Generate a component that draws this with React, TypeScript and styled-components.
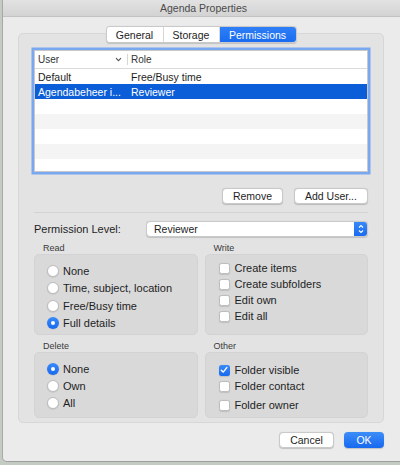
import React from "react";
import styled, { createGlobalStyle } from "styled-components";

const Global = createGlobalStyle`
  html, body {
    margin: 0;
    padding: 0;
    width: 400px;
    height: 465px;
    overflow: hidden;
    background: #c4cbc2;
  }
  body {
    font-family: "Liberation Sans", Arial, sans-serif;
    color: #1e1e1e;
    -webkit-font-smoothing: antialiased;
  }
  * { box-sizing: border-box; }
`;

const Window = styled.div`
  margin-left: 2px;
  height: 462px;
  background: #ebebeb;
  border-left: 1px solid #a8a8a8;
  border-bottom: 1px solid #9e9e9e;
  border-bottom-left-radius: 5px;
  display: flex;
  flex-direction: column;
`;

const TitleBar = styled.div`
  height: 17px;
  flex: none;
  background: linear-gradient(#e2e2e2, #d3d3d3);
  border-bottom: 1px solid #c2c2c2;
  display: flex;
  align-items: center;
  justify-content: center;
  font-size: 10.5px;
  color: #4b4b4b;
  padding-left: 4px;
`;

const Body = styled.div`
  flex: 1;
  display: flex;
  flex-direction: column;
  padding: 0 16px 0 15px;
`;

const TabsRow = styled.div`
  display: flex;
  justify-content: center;
  margin-top: 9px;
  position: relative;
  z-index: 1;
`;

const Segmented = styled.div`
  display: flex;
  height: 17px;
  background: #fff;
  border: 1px solid #c9c9c9;
  border-radius: 4px;
  overflow: hidden;
  box-shadow: 0 0.5px 1px rgba(0, 0, 0, 0.15);
`;

const Segment = styled.div<{ $w: number; $active?: boolean }>`
  width: ${(p) => p.$w}px;
  display: flex;
  align-items: center;
  justify-content: center;
  font-size: 10.5px;
  color: ${(p) => (p.$active ? "#fff" : "#222")};
  background: ${(p) => (p.$active ? "linear-gradient(#2f7ff6, #1a6cf1)" : "#fff")};
  & + & {
    border-left: 1px solid #d8d8d8;
  }
`;

const TabBox = styled.div`
  margin-top: -10px;
  height: 390px;
  background: #e3e3e3;
  border: 1px solid #d7d7d7;
  border-radius: 5px;
  padding: 16px 15px 4px 15px;
  display: flex;
  flex-direction: column;
`;

const Table = styled.div`
  height: 122px;
  flex: none;
  background: #fff;
  border: 1px solid #c9c9c9;
  box-shadow: 0 0 0 2.5px rgba(76, 142, 245, 0.7);
  display: flex;
  flex-direction: column;
  overflow: hidden;
`;

const HeaderRow = styled.div`
  height: 18px;
  flex: none;
  display: grid;
  grid-template-columns: 93px 1fr;
  border-bottom: 1px solid #dadada;
  font-size: 10px;
  color: #333;
`;

const HeaderCell = styled.div<{ $sep?: boolean }>`
  display: flex;
  align-items: center;
  justify-content: space-between;
  padding: 0 5px 0 3px;
  border-right: ${(p) => (p.$sep ? "1px solid #d6d6d6" : "none")};
  margin: 3px 0;
`;

const Row = styled.div<{ $sel?: boolean; $odd?: boolean }>`
  height: 15px;
  flex: none;
  display: grid;
  grid-template-columns: 93px 1fr;
  align-items: center;
  font-size: 10.5px;
  background: ${(p) => (p.$sel ? "#0b5ed7" : p.$odd ? "#f4f4f4" : "#fff")};
  color: ${(p) => (p.$sel ? "#fff" : "#1e1e1e")};
`;

const Cell = styled.div`
  padding-left: 3px;
  white-space: nowrap;
  overflow: hidden;
`;

const ButtonRow = styled.div<{ $mt: number; $gap: number }>`
  display: flex;
  flex: none;
  justify-content: flex-end;
  gap: ${(p) => p.$gap}px;
  margin-top: ${(p) => p.$mt}px;
`;

const Button = styled.div<{ $w: number; $primary?: boolean }>`
  width: ${(p) => p.$w}px;
  height: 16px;
  border-radius: 4px;
  display: flex;
  align-items: center;
  justify-content: center;
  font-size: 10.5px;
  color: ${(p) => (p.$primary ? "#fff" : "#1e1e1e")};
  background: ${(p) => (p.$primary ? "linear-gradient(#3d8df8, #1769ef)" : "#fff")};
  border: ${(p) => (p.$primary ? "none" : "1px solid #c9c9c9")};
  box-shadow: 0 0.5px 1px rgba(0, 0, 0, 0.18);
`;

const Separator = styled.div`
  height: 1px;
  flex: none;
  background: #d2d2d2;
  margin-top: 8px;
`;

const PermRow = styled.div`
  display: grid;
  flex: none;
  grid-template-columns: 112px 1fr;
  align-items: center;
  margin-top: 8px;
  font-size: 11px;
`;

const Select = styled.div`
  height: 16px;
  background: #fff;
  border: 1px solid #c9c9c9;
  border-radius: 4px;
  box-shadow: 0 0.5px 1px rgba(0, 0, 0, 0.15);
  display: flex;
  align-items: center;
  justify-content: space-between;
  padding-left: 7px;
  font-size: 10.5px;
  overflow: hidden;
`;

const Stepper = styled.div`
  width: 14px;
  height: 16px;
  margin: -1px -1px -1px 0;
  background: linear-gradient(#3a8bf8, #1769ef);
  border-radius: 0 4px 4px 0;
  display: flex;
  align-items: center;
  justify-content: center;
`;

const Groups = styled.div`
  display: grid;
  grid-template-columns: 1fr 1fr;
  column-gap: 7px;
  margin-top: 6px;
`;

const Group = styled.div<{ $mt?: number }>`
  display: flex;
  flex-direction: column;
  margin-top: ${(p) => p.$mt ?? 0}px;
`;

const GroupLabel = styled.div`
  height: 11px;
  line-height: 11px;
  font-size: 9px;
  color: #3a3a3a;
  padding-left: 9px;
`;

const GroupBox = styled.div<{ $h: number; $pt: number; $pl: number }>`
  height: ${(p) => p.$h}px;
  background: #d9d9d9;
  border: 1px solid #d3d3d3;
  border-radius: 5px;
  padding: ${(p) => p.$pt}px 0 0 ${(p) => p.$pl}px;
  display: flex;
  flex-direction: column;
`;

const Option = styled.div<{ $h: number; $extra?: number; $gap: number }>`
  height: ${(p) => p.$h}px;
  margin-top: ${(p) => p.$extra ?? 0}px;
  display: flex;
  align-items: center;
  gap: ${(p) => p.$gap}px;
  font-size: 11px;
  color: #1e1e1e;
`;

const RadioDot = styled.span<{ $on?: boolean }>`
  width: 12px;
  height: 12px;
  border-radius: 50%;
  flex: none;
  display: flex;
  align-items: center;
  justify-content: center;
  background: ${(p) => (p.$on ? "linear-gradient(#3a8bf8, #1769ef)" : "#fff")};
  border: ${(p) => (p.$on ? "none" : "1px solid #bdbdbd")};
  box-shadow: 0 0.5px 1px rgba(0, 0, 0, 0.15);
  &::after {
    content: "";
    display: ${(p) => (p.$on ? "block" : "none")};
    width: 4px;
    height: 4px;
    border-radius: 50%;
    background: #fff;
  }
`;

const CheckBox = styled.span<{ $on?: boolean }>`
  width: 11px;
  height: 11px;
  border-radius: 2.5px;
  flex: none;
  display: flex;
  align-items: center;
  justify-content: center;
  background: ${(p) => (p.$on ? "linear-gradient(#3a8bf8, #1769ef)" : "#fff")};
  border: ${(p) => (p.$on ? "none" : "1px solid #bdbdbd")};
  box-shadow: 0 0.5px 1px rgba(0, 0, 0, 0.12);
`;

const Radio = ({ on, label, h, extra }: { on?: boolean; label: string; h: number; extra?: number }) => (
  <Option $h={h} $extra={extra} $gap={4}>
    <RadioDot $on={on} />
    <span>{label}</span>
  </Option>
);

const Check = ({ on, label, h, extra }: { on?: boolean; label: string; h: number; extra?: number }) => (
  <Option $h={h} $extra={extra} $gap={5}>
    <CheckBox $on={on}>
      {on && (
        <svg width="8" height="8" viewBox="0 0 8 8">
          <path d="M1.3 4.2 L3.2 6.1 L6.8 1.6" fill="none" stroke="#fff" strokeWidth="1.4" strokeLinecap="round" strokeLinejoin="round" />
        </svg>
      )}
    </CheckBox>
    <span>{label}</span>
  </Option>
);

const rows = [
  { user: "Default", role: "Free/Busy time" },
  { user: "Agendabeheer i...", role: "Reviewer", sel: true },
  { user: "", role: "" },
  { user: "", role: "" },
  { user: "", role: "" },
  { user: "", role: "" },
  { user: "", role: "" },
];

export default function App() {
  return (
    <>
      <Global />
      <Window>
        <TitleBar>Agenda Properties</TitleBar>
        <Body>
          <TabsRow>
            <Segmented>
              <Segment $w={56}>General</Segment>
              <Segment $w={56}>Storage</Segment>
              <Segment $w={77} $active>
                Permissions
              </Segment>
            </Segmented>
          </TabsRow>
          <TabBox>
            <Table>
              <HeaderRow>
                <HeaderCell $sep>
                  <span>User</span>
                  <svg width="7" height="5" viewBox="0 0 7 5">
                    <path d="M1 1.2 L3.5 3.7 L6 1.2" fill="none" stroke="#555" strokeWidth="1.1" />
                  </svg>
                </HeaderCell>
                <HeaderCell>
                  <span>Role</span>
                </HeaderCell>
              </HeaderRow>
              {rows.map((r, i) => (
                <Row key={i} $sel={r.sel} $odd={i % 2 === 1}>
                  <Cell>{r.user}</Cell>
                  <Cell>{r.role}</Cell>
                </Row>
              ))}
            </Table>
            <ButtonRow $mt={16} $gap={11}>
              <Button $w={61}>Remove</Button>
              <Button $w={74}>Add User...</Button>
            </ButtonRow>
            <Separator />
            <PermRow>
              <span>Permission Level:</span>
              <Select>
                <span>Reviewer</span>
                <Stepper>
                  <svg width="8" height="12" viewBox="0 0 8 12">
                    <path d="M2 4.5 L4 2.5 L6 4.5 M2 7.5 L4 9.5 L6 7.5" fill="none" stroke="#fff" strokeWidth="1.1" />
                  </svg>
                </Stepper>
              </Select>
            </PermRow>
            <Groups>
              <Group>
                <GroupLabel>Read</GroupLabel>
                <GroupBox $h={81} $pt={7} $pl={12}>
                  <Radio label="None" h={17.5} />
                  <Radio label="Time, subject, location" h={17.5} />
                  <Radio label="Free/Busy time" h={17.5} />
                  <Radio label="Full details" h={17.5} on />
                </GroupBox>
              </Group>
              <Group>
                <GroupLabel>Write</GroupLabel>
                <GroupBox $h={81} $pt={5} $pl={13}>
                  <Check label="Create items" h={16} />
                  <Check label="Create subfolders" h={16} />
                  <Check label="Edit own" h={16} />
                  <Check label="Edit all" h={16} />
                </GroupBox>
              </Group>
              <Group $mt={6}>
                <GroupLabel>Delete</GroupLabel>
                <GroupBox $h={66} $pt={7} $pl={12}>
                  <Radio label="None" h={17} on />
                  <Radio label="Own" h={17} />
                  <Radio label="All" h={17} />
                </GroupBox>
              </Group>
              <Group $mt={6}>
                <GroupLabel>Other</GroupLabel>
                <GroupBox $h={66} $pt={9} $pl={13}>
                  <Check label="Folder visible" h={16} on />
                  <Check label="Folder contact" h={16} />
                  <Check label="Folder owner" h={16} extra={3} />
                </GroupBox>
              </Group>
            </Groups>
          </TabBox>
          <ButtonRow $mt={9} $gap={10}>
            <Button $w={55}>Cancel</Button>
            <Button $w={40} $primary>
              OK
            </Button>
          </ButtonRow>
        </Body>
      </Window>
    </>
  );
}
